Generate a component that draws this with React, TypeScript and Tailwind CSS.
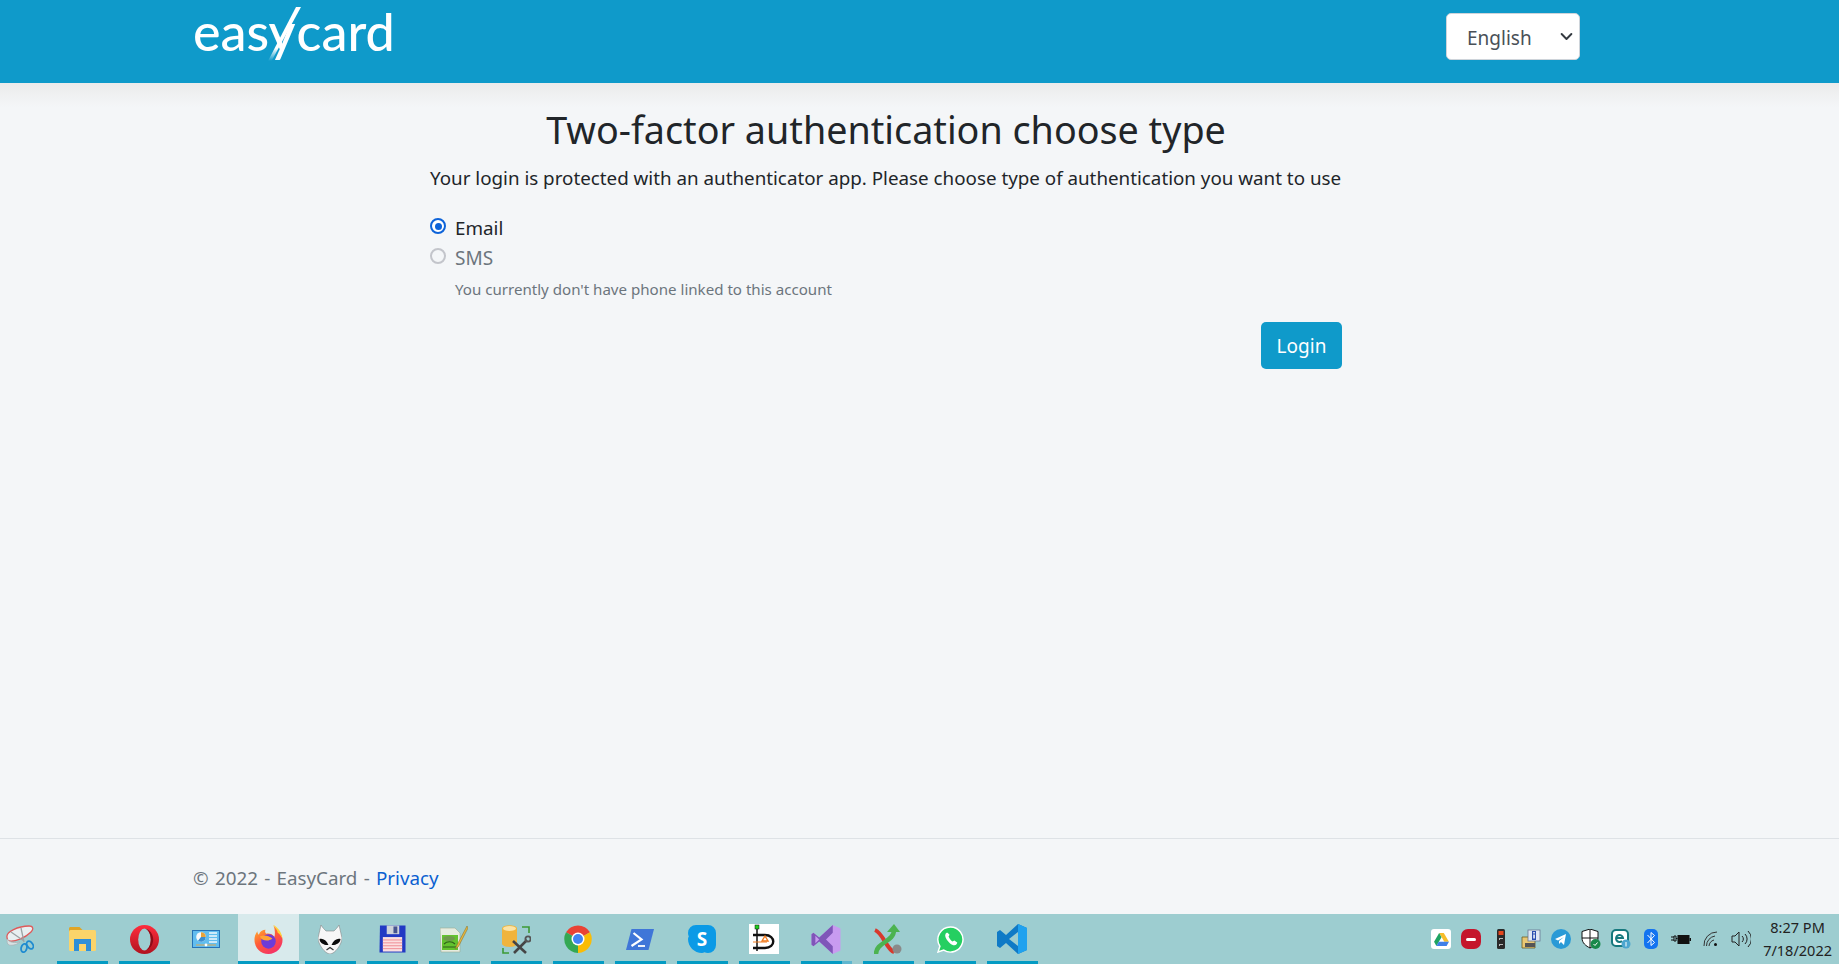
const font = { fontFamily: '"Noto Sans", sans-serif' };

const Icons: JSX.Element[] = [
  // snipping tool
  <svg viewBox="0 0 28 28" className="w-[28px] h-[28px]" key="0">
    <path d="M1 12C0 7 12 1 23 1c4 0 5 3 2 6-6 6-16 10-22 9-1 0-2-2-2-4z" fill="#e9eff1" stroke="#de5a5a" strokeWidth="1.300" />
    <path d="M1 14c0 3 0 5 2 6 4 1 9-1 11-3-5 1-10 1-13-3z" fill="#d8e1e3" stroke="#a9b4b6" strokeWidth=".8" />
    <path d="M5 7l13 9M15 3l3 14" stroke="#9ca3a6" strokeWidth="1.300" />
    <ellipse cx="18" cy="23" rx="2.800" ry="4.200" fill="none" stroke="#1f8bd0" strokeWidth="1.800" transform="rotate(15 18 23)" />
    <ellipse cx="24" cy="20" rx="2.800" ry="4.200" fill="none" stroke="#1f8bd0" strokeWidth="1.800" transform="rotate(-35 24 20)" />
  </svg>,
  // folder
  <svg viewBox="0 0 27 24" className="w-[27px] h-[24px]" key="1">
    <path d="M0 1.500C0 .7.700 0 1.500 0h9l3 3v4H0z" fill="#e0a526" />
    <rect x="0" y="3" width="27" height="21" rx="1.500" fill="#fbd46a" />
    <path d="M5 12h17v12h-5v-7h-7v7H5z" fill="#2f8fd8" />
  </svg>,
  // opera
  <svg viewBox="0 0 30 30" className="w-[29px] h-[29px]" key="2">
    <defs>
      <linearGradient id="op" x1="0" y1="0" x2="0" y2="1">
        <stop offset="0" stopColor="#ff2d3d" />
        <stop offset="1" stopColor="#b0121f" />
      </linearGradient>
    </defs>
    <ellipse cx="15" cy="15" rx="15" ry="15" fill="url(#op)" />
    <ellipse cx="15" cy="15" rx="6.500" ry="11.500" fill="#9dcdd0" />
    <path d="M21.500 15c0-6-2.800-10.800-6.500-11.500C20 4 24 9 24 15s-4 11-9 11.500c3.700-.7 6.500-5.500 6.500-11.500z" fill="#8f0c18" />
  </svg>,
  // control panel
  <svg viewBox="0 0 28 18" className="w-[28px] h-[18px]" key="3">
    <rect x="0.500" y="0.500" width="27" height="17" fill="#62bdee" stroke="#2672b5" />
    <circle cx="9" cy="7" r="4.800" fill="#f6f9fb" />
    <path d="M9 7V2.200A4.800 4.800 0 0 1 13.800 7z" fill="#e8a33a" />
    <path d="M9 7h4.800A4.800 4.800 0 0 1 6 10.700z" fill="#3c8fcf" />
    <path d="M17 3h8M17 6h8M17 9h8M17 12h8" stroke="#f1f8fc" strokeWidth="1.300" />
    <path d="M4 15h20" stroke="#e0a94e" strokeWidth="1" />
    <circle cx="14" cy="15" r="1.400" fill="#fff" />
  </svg>,
  // firefox
  <svg viewBox="0 0 30 30" className="w-[29px] h-[29px]" key="4">
    <defs>
      <linearGradient id="ff" x1="0.200" y1="0" x2="0.800" y2="1">
        <stop offset="0" stopColor="#ffb52e" />
        <stop offset="0.450" stopColor="#ff5c39" />
        <stop offset="1" stopColor="#f22c6e" />
      </linearGradient>
    </defs>
    <path d="M20 0c1 3 9 7 9.500 15C30 23 23 30 15 30S.5 24 .5 15c0-3 1-6 3-8.500 0 1.500.5 3 1.500 3.500C6 7 9 5 12 5c-1 1.500-.5 3 .5 4 3-.5 7 0 8.500 4 1-3 1-8-1-13z" fill="url(#ff)" />
    <path d="M20 0c4 2 9 7 9.500 15-1-3-3-6-5-7 0-3-3-5-4.500-8z" fill="#ffd23a" />
    <circle cx="15" cy="17" r="7.500" fill="#6d3bd8" />
    <path d="M6 12c4-2 9-1 13 2-1 1-3 1.500-4 2-3 .5-7 0-9-4z" fill="#ffa436" />
  </svg>,
  // alien
  <svg viewBox="0 0 24 29" className="w-[24px] h-[29px]" key="5">
    <path d="M3 0c1 2 4 5 5 6h8c1-1 4-4 5-6l3 13c0 6-7 16-12 16S0 19 0 13z" fill="#f7f7f7" stroke="#888" strokeWidth=".6" />
    <path d="M1.500 14c3-1 7 1 9 6-4 .5-9-2-9-6zM22.500 14c-3-1-7 1-9 6 4 .5 9-2 9-6z" fill="#0c0c0c" />
    <path d="M8.500 25l3.500-2.500 3.500 2.500" stroke="#333" strokeWidth="1.300" fill="none" />
  </svg>,
  // floppy
  <svg viewBox="0 0 28 28" className="w-[27px] h-[28px]" key="6">
    <path d="M1 0h26.500V28H.5z" fill="#2239c4" />
    <rect x="8" y="0" width="13" height="9" fill="#cfd3da" />
    <rect x="15" y="1" width="4" height="7" fill="#46548f" />
    <rect x="4" y="12" width="20" height="15" fill="#fbdfe0" />
    <path d="M4 15h20M4 18h20M4 21h20M4 24h20" stroke="#ee8a93" strokeWidth="1" />
  </svg>,
  // notepad++
  <svg viewBox="0 0 28 27" className="w-[28px] h-[27px]" key="7">
    <path d="M0 2h15l5 5v19H1z" fill="#e6ecdf" stroke="#9bab94" strokeWidth=".6" />
    <path d="M2 9h16v15H2z" fill="#63c22e" />
    <ellipse cx="9" cy="12.500" rx="6" ry="2.500" fill="#6f9a4c" />
    <path d="M4 18c3-3 8-3 11 0M3 21h13" stroke="#2f5d1b" strokeWidth="1.100" fill="none" />
    <path d="M27 0L17 19l-2 4 3.500-2.500L28 2z" fill="#e8b63c" stroke="#7d6a2b" strokeWidth=".5" />
  </svg>,
  // db tools
  <svg viewBox="0 0 29 29" className="w-[29px] h-[29px]" key="8">
    <path d="M0 3.500c0-4.500 15-4.500 15 0v15c0 4.500-15 4.500-15 0z" fill="#f0b43c" />
    <ellipse cx="7.500" cy="3.500" rx="6.500" ry="2.400" fill="#fbe3a5" />
    <path d="M20 2h7v6M1 23v5h6" stroke="#3d9a35" strokeWidth="1.600" fill="none" />
    <path d="M11 16l13 12M25 15L12 28" stroke="#454545" strokeWidth="2.600" />
    <circle cx="26" cy="14" r="2.600" fill="none" stroke="#555" strokeWidth="1.800" />
  </svg>,
  // chrome
  <svg viewBox="0 0 28 28" className="w-[28px] h-[28px]" key="9">
    <path d="M14 14L2 7.200A14 14 0 0 1 26 7.200z" fill="#ea4335" />
    <path d="M14 14L2 7.200A14 14 0 0 0 14 28z" fill="#34a853" />
    <path d="M14 14l12-6.800A14 14 0 0 1 14 28z" fill="#fbbc04" />
    <circle cx="14" cy="14" r="6.500" fill="#fff" />
    <circle cx="14" cy="14" r="5" fill="#4285f4" />
  </svg>,
  // powershell
  <svg viewBox="0 0 28 21" className="w-[28px] h-[21px]" key="10">
    <path d="M5.500 0H28l-5.500 21H0z" fill="#3f76d8" />
    <path d="M7.500 4l8 6.500-10 6.500" stroke="#fff" strokeWidth="2.200" fill="none" />
    <path d="M12 17h7" stroke="#fff" strokeWidth="1.800" />
  </svg>,
  // skype
  <svg viewBox="0 0 28 28" className="w-[28px] h-[28px]" key="11">
    <path d="M8 0a8 8 0 0 0-8 8c0 1.300.3 2.500.8 3.600C.3 12.300 0 13.100 0 14c0 7.700 6.300 14 14 14 .9 0 1.700-.3 2.400-.8 1.100.5 2.300.8 3.600.8a8 8 0 0 0 8-8V8a8 8 0 0 0-8-8z" fill="#0b9ae6" />
    <text x="14" y="21" textAnchor="middle" fontSize="19" fontWeight="700" fill="#fff" fontFamily="Noto Sans">S</text>
  </svg>,
  // dia
  <svg viewBox="0 0 30 30" className="w-[30px] h-[30px]" key="12">
    <rect width="30" height="30" fill="#fff" />
    <rect x="6" y="1" width="4" height="4" fill="#1fd01f" stroke="#111" strokeWidth=".5" />
    <path d="M8 5v22" stroke="#111" strokeWidth="1.500" />
    <path d="M4 11h12c11 0 11 13 0 13H4" stroke="#111" strokeWidth="2.400" fill="none" />
    <path d="M13 17l3-5 3 5z" fill="none" stroke="#f07a1c" strokeWidth="1.400" />
    <path d="M4 18h14" stroke="#f07a1c" strokeWidth="1" />
  </svg>,
  // visual studio
  <svg viewBox="0 0 30 30" className="w-[30px] h-[29px]" key="13">
    <path d="M22 0l8 3.500v23L22 30 8 17l-6 5-2-1.500V9.500L2 8l6 5z" fill="#c89bf0" />
    <path d="M22 0v8l-7 7 7 7v8L8 17l-6 5-2-1.500V9.500L2 8l6 5z" fill="#7f56b8" />
    <path d="M4 11v8l4-4z" fill="#c89bf0" />
  </svg>,
  // git x
  <svg viewBox="0 0 28 30" className="w-[28px] h-[30px]" key="14">
    <path d="M1 6c8 3 12 20 19 22" stroke="#d8392c" strokeWidth="4" fill="none" />
    <path d="M2 30C2 18 20 18 20 6" stroke="#4cb350" strokeWidth="4.500" fill="none" />
    <path d="M13 8L20 0l6 8z" fill="#4cb350" />
    <circle cx="23" cy="25" r="4.500" fill="#8a8a8a" />
  </svg>,
  // whatsapp
  <svg viewBox="0 0 28 28" className="w-[27px] h-[27px]" key="15">
    <path d="M14 1A13 13 0 0 0 3 21L1 27l6-2A13 13 0 1 0 14 1z" fill="#25cf61" stroke="#fff" strokeWidth="1.500" />
    <path d="M10 7c-2 1-2 4 0 7s5 6 8 6c2 0 3-2 3-3l-3-2-2 1c-2-1-3-3-4-5l1-2-2-2z" fill="#fff" />
  </svg>,
  // vscode
  <svg viewBox="0 0 30 30" className="w-[30px] h-[30px]" key="16">
    <path d="M21 0l9 4v22l-9 4-12-11-6 5-3-2V8l3-2 6 5z" fill="#0f7ac6" />
    <path d="M21 0l9 4v22l-9 4z" fill="#20a2ef" />
    <path d="M21 8v14l-9-7z" fill="#9dcdd0" />
  </svg>,
];

const Tray: JSX.Element[] = [
  <div key="a" className="w-[20px] h-[20px] rounded-[3px] bg-white flex items-center justify-center">
    <svg viewBox="0 0 16 14" className="w-[15px] h-[13px]">
      <path d="M5.500 0h5L16 9.500h-5z" fill="#f6bd2a" />
      <path d="M5.500 0L0 9.500 2.500 14 8 4.500z" fill="#1ea362" />
      <path d="M5 9.500h11L13.500 14h-11z" fill="#3f7fe8" />
    </svg>
  </div>,
  <div key="b" className="w-[20px] h-[20px] rounded-[7px] bg-[#c5162c] flex items-center justify-center">
    <span className="w-[10px] h-[3px] bg-white rounded-sm" />
  </div>,
  <svg key="c" viewBox="0 0 8 20" className="w-[8px] h-[20px]">
    <rect width="8" height="20" rx="1.500" fill="#2a2a2a" />
    <rect x="1.500" y="2" width="5" height="4" fill="#e5471d" />
    <path d="M2 9h4v1H3v1H2zM2 15h4v1H3v1H2z" fill="#bbb" />
  </svg>,
  <svg key="d" viewBox="0 0 20 20" className="w-[20px] h-[20px]">
    <path d="M1 8h6l2 2h5v9H1z" fill="#e9c874" stroke="#6b5a25" strokeWidth=".8" />
    <rect x="7" y="1" width="12" height="11" fill="#dfe6f4" stroke="#6a7893" strokeWidth=".8" />
    <rect x="11" y="2" width="4" height="9" fill="#2c4db0" />
    <rect x="12.300" y="3" width="1.500" height="1.500" fill="#fff" />
    <rect x="12.300" y="5.500" width="1.500" height="4" fill="#fff" />
    <path d="M4 14h10v4H4z" fill="#555" />
  </svg>,
  <svg key="e" viewBox="0 0 20 20" className="w-[20px] h-[20px]">
    <circle cx="10" cy="10" r="10" fill="#2a9ad6" />
    <path d="M4 10l11-5-2 11-3-3-2 2v-3l5-4-6 3.500z" fill="#fff" />
  </svg>,
  <svg key="f" viewBox="0 0 20 20" className="w-[20px] h-[20px]">
    <path d="M9 0l8 2.500V9c0 5-4 8-8 10-4-2-8-5-8-10V2.500z" fill="#fff" stroke="#111" strokeWidth="1" />
    <path d="M9 0v19M1 9h16" stroke="#111" strokeWidth="1" />
    <circle cx="14.500" cy="15" r="5" fill="#18894a" />
    <path d="M12.500 15l1.500 1.500 2.500-3" stroke="#fff" strokeWidth="1" fill="none" />
  </svg>,
  <svg key="g" viewBox="0 0 20 20" className="w-[20px] h-[20px]">
    <rect x="1" y="1" width="16" height="16" rx="4" fill="#fff" stroke="#17797e" strokeWidth="2" />
    <path d="M5 9h7a3.500 3.500 0 1 0-1 3" stroke="#17797e" strokeWidth="2" fill="none" />
    <circle cx="15" cy="15" r="4.500" fill="#4ca6cf" />
    <rect x="14.500" y="13" width="1" height="4.500" fill="#fff" />
  </svg>,
  <svg key="h" viewBox="0 0 14 20" className="w-[14px] h-[20px]">
    <rect width="14" height="20" rx="5" fill="#1474f0" />
    <path d="M3.500 6l7 7.500L7 16.500v-13l3.500 3L3.500 14" stroke="#fff" strokeWidth="1" fill="none" />
  </svg>,
  <svg key="i" viewBox="0 0 20 12" className="w-[20px] h-[12px]">
    <path d="M0 4h3M0 7h3M3 3h2v5H3z" stroke="#111" strokeWidth="1" fill="none" />
    <path d="M5 5.500h1.500" stroke="#111" />
    <rect x="6.500" y="2" width="12" height="9" fill="#111" />
    <rect x="18.500" y="5" width="1.500" height="3" fill="#111" />
  </svg>,
  <svg key="j" viewBox="0 0 16 16" className="w-[16px] h-[16px]">
    <path d="M1 15A13 13 0 0 1 14 1M3.500 15A10 10 0 0 1 12 5M6 15a7 7 0 0 1 5-6" stroke="#333" strokeWidth="1" fill="none" />
    <circle cx="12.500" cy="13.500" r="1.500" fill="#111" />
  </svg>,
  <svg key="k" viewBox="0 0 20 20" className="w-[20px] h-[20px]">
    <path d="M1 7h3l4-4v14l-4-4H1z" fill="none" stroke="#222" strokeWidth="1" />
    <path d="M11 7a4 4 0 0 1 0 6M14 5a7 7 0 0 1 0 10M17 2a11 11 0 0 1 0 16" stroke="#222" strokeWidth="1" fill="none" />
  </svg>,
];

const activeIdx = new Set([1, 2, 4, 5, 6, 7, 8, 9, 10, 11, 12, 13, 14, 15, 16]);

export default function App() {
  return (
    <div className="h-[964px] flex flex-col bg-[#f4f6f8] overflow-hidden text-[#212529]" style={font}>
      <header className="h-[83px] shrink-0 bg-[#0f9aca] flex items-start justify-between pl-[193px] pr-[259px]">
        <div className="relative w-[200px] h-[64px] text-white select-none">
          <div className="flex items-baseline pt-[1px] text-[52px] leading-[60px] font-medium" style={{ fontFamily: "Lato, sans-serif" }}>
            <span>easy</span>
            <span className="ml-[1px]">card</span>
          </div>
          <svg viewBox="0 0 50 60" className="absolute left-[70px] top-[4px] w-[50px] h-[60px]">
            <defs>
              <linearGradient id="ck" x1="0" y1="0" x2="0" y2="1">
                <stop offset="0.750" stopColor="#fff" />
                <stop offset="0.980" stopColor="#fff" stopOpacity="0" />
              </linearGradient>
            </defs>
            <path d="M38 3H33L5 57l3 1z" fill="url(#ck)" />
          </svg>
        </div>
        <div className="relative mt-[13px]">
          <select className="appearance-none w-[134px] h-[47px] bg-white rounded-[5px] pl-[20px] pt-[3px] text-[19px] text-[#495057] border border-[#ced4da]" defaultValue="English">
            <option>English</option>
          </select>
          <svg viewBox="0 0 16 16" className="absolute right-[7px] top-[17px] w-[13px] h-[13px] pointer-events-none">
            <path d="M2 5l6 6 6-6" stroke="#343a40" strokeWidth="2.400" fill="none" strokeLinecap="round" strokeLinejoin="round" />
          </svg>
        </div>
      </header>

      <main className="flex-1 flex flex-col bg-[linear-gradient(#ebebeb,#f4f6f8_24px)]">
        <div className="w-[912px] ml-[430px]">
          <h1 className="text-[37.7px] leading-[46px] font-normal text-center mt-[24px]">Two-factor authentication choose type</h1>
          <p className="text-[18.8px] leading-[28px] mt-[11px] whitespace-nowrap">Your login is protected with an authenticator app. Please choose type of authentication you want to use</p>
          <div className="mt-[21px]">
            <label className="flex items-center h-[30px]">
              <span className="w-[16px] h-[16px] rounded-full border-[2.5px] border-[#0d63d9] bg-white flex items-center justify-center mr-[9px] -mt-[4px]">
                <span className="w-[7px] h-[7px] rounded-full bg-[#0d63d9]" />
              </span>
              <span className="text-[18.8px]">Email</span>
            </label>
            <label className="flex items-center h-[30px] text-[#6c757d]">
              <span className="w-[16px] h-[16px] rounded-full border-2 border-[#c3c5cb] bg-[#f4f6f8] mr-[9px] -mt-[4px]" />
              <span className="text-[19px]">SMS</span>
            </label>
            <p className="text-[15.1px] leading-[22px] text-[#6c757d] ml-[25px] mt-[5px]">You currently don't have phone linked to this account</p>
          </div>
          <div className="flex justify-end mt-[22px]">
            <button className="w-[81px] h-[47px] rounded-[5px] bg-[#0f9aca] text-white text-[19px] pt-[2px]">Login</button>
          </div>
        </div>
      </main>

      <footer className="h-[76px] shrink-0 border-t border-[#dee2e6] pl-[193px] flex items-center text-[18.8px] text-[#6c757d]">
        <span className="mt-[4px]" style={{ wordSpacing: "1.4px" }}>© 2022 - EasyCard - <a className="text-[#0a5fd1]">Privacy</a></span>
      </footer>

      <div className="h-[50px] shrink-0 bg-[#9dcdd0] flex justify-between overflow-hidden">
        <div className="flex -ml-[11px]">
          {Icons.map((icon, i) => (
            <div key={i} className="relative w-[62px] h-[50px] flex items-center justify-center">
              {i === 4 && <span className="absolute inset-y-0 left-[1px] right-0 bg-[#d8eaec]" />}
              <span className="relative flex">{icon}</span>
              {activeIdx.has(i) && (
                <span className={`absolute bottom-0 h-[3px] bg-[#049bc3] ${i === 4 ? "left-[1px] right-0" : "left-[6px] right-[5px]"}`} />
              )}
              {i === 13 && <span className="absolute bottom-0 h-[3px] left-[47px] right-[5px] bg-[#5fb6cf]" />}
            </div>
          ))}
        </div>
        <div className="flex items-center pr-[7px]">
          <div className="flex items-center mr-[7px]">
            {Tray.map((t, i) => (
              <div key={i} className="w-[30px] flex items-center justify-center">{t}</div>
            ))}
          </div>
          <div className="text-[14.5px] leading-[23px] text-[#222] whitespace-nowrap">
            <div className="text-center">8:27 PM</div>
            <div>7/18/2022</div>
          </div>
        </div>
      </div>
    </div>
  );
}
